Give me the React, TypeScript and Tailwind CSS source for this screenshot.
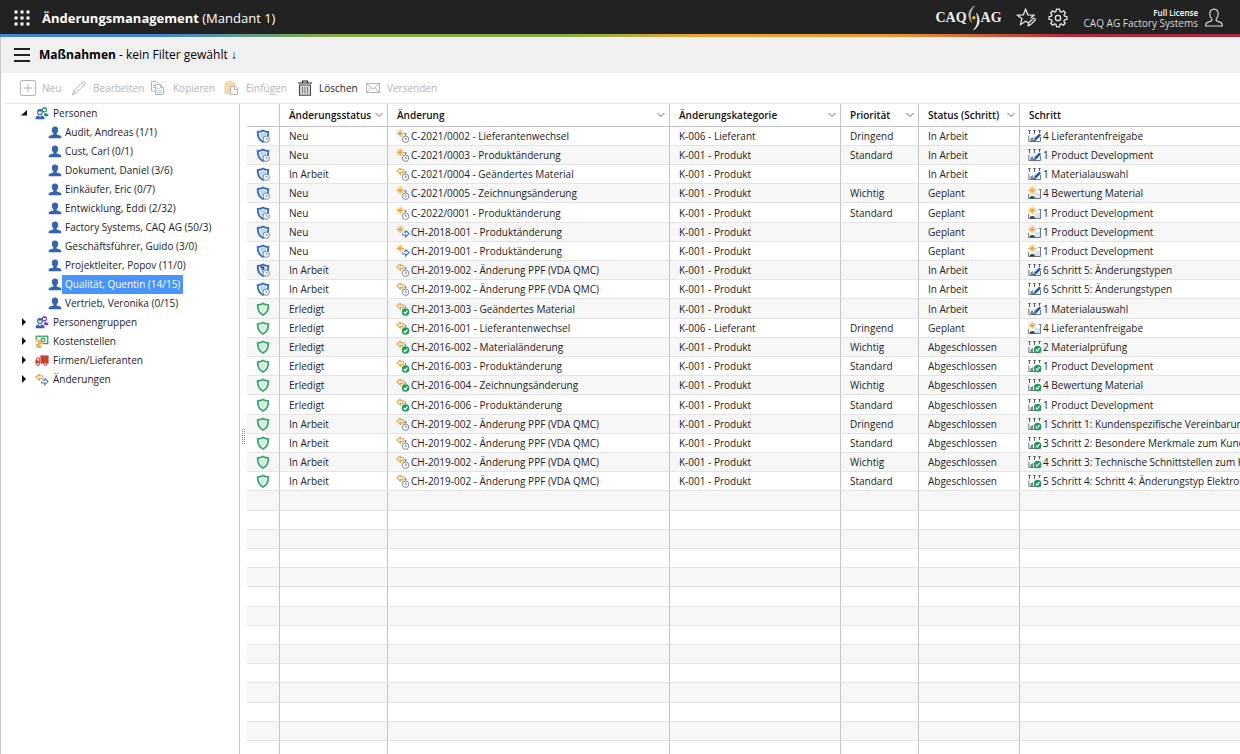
import React from "react";

type ShieldKind = "open" | "question" | "done";
type ChangeKind = "new-clock" | "loop-clock" | "new-arrow" | "loop-check";
type StepKind = "edit" | "planned" | "check";

interface Row {
  shield: ShieldKind;
  status: string;
  icon: ChangeKind;
  change: string;
  category: string;
  priority: string;
  stepStatus: string;
  stepIcon: StepKind;
  step: string;
}

const r = (
  shield: ShieldKind,
  status: string,
  icon: ChangeKind,
  change: string,
  category: string,
  priority: string,
  stepStatus: string,
  stepIcon: StepKind,
  step: string,
): Row => ({ shield, status, icon, change, category, priority, stepStatus, stepIcon, step });

const PRODUCT = "K-001 - Produkt";
const SUPPLIER = "K-006 - Lieferant";

const rows: Row[] = [
  r("open", "Neu", "new-clock", "C-2021/0002 - Lieferantenwechsel", SUPPLIER, "Dringend", "In Arbeit", "edit", "4 Lieferantenfreigabe"),
  r("open", "Neu", "new-clock", "C-2021/0003 - Produktänderung", PRODUCT, "Standard", "In Arbeit", "edit", "1 Product Development"),
  r("open", "In Arbeit", "loop-clock", "C-2021/0004 - Geändertes Material", PRODUCT, "", "In Arbeit", "edit", "1 Materialauswahl"),
  r("open", "Neu", "new-clock", "C-2021/0005 - Zeichnungsänderung", PRODUCT, "Wichtig", "Geplant", "planned", "4 Bewertung Material"),
  r("open", "Neu", "new-clock", "C-2022/0001 - Produktänderung", PRODUCT, "Standard", "Geplant", "planned", "1 Product Development"),
  r("open", "Neu", "new-arrow", "CH-2018-001 - Produktänderung", PRODUCT, "", "Geplant", "planned", "1 Product Development"),
  r("open", "Neu", "new-arrow", "CH-2019-001 - Produktänderung", PRODUCT, "", "Geplant", "planned", "1 Product Development"),
  r("question", "In Arbeit", "loop-clock", "CH-2019-002 - Änderung PPF (VDA QMC)", PRODUCT, "", "In Arbeit", "edit", "6 Schritt 5: Änderungstypen"),
  r("open", "In Arbeit", "loop-clock", "CH-2019-002 - Änderung PPF (VDA QMC)", PRODUCT, "", "In Arbeit", "edit", "6 Schritt 5: Änderungstypen"),
  r("done", "Erledigt", "loop-check", "CH-2013-003 - Geändertes Material", PRODUCT, "", "In Arbeit", "edit", "1 Materialauswahl"),
  r("done", "Erledigt", "loop-check", "CH-2016-001 - Lieferantenwechsel", SUPPLIER, "Dringend", "Geplant", "planned", "4 Lieferantenfreigabe"),
  r("done", "Erledigt", "loop-check", "CH-2016-002 - Materialänderung", PRODUCT, "Wichtig", "Abgeschlossen", "check", "2 Materialprüfung"),
  r("done", "Erledigt", "loop-check", "CH-2016-003 - Produktänderung", PRODUCT, "Standard", "Abgeschlossen", "check", "1 Product Development"),
  r("done", "Erledigt", "loop-check", "CH-2016-004 - Zeichnungsänderung", PRODUCT, "Wichtig", "Abgeschlossen", "check", "4 Bewertung Material"),
  r("done", "Erledigt", "loop-check", "CH-2016-006 - Produktänderung", PRODUCT, "Standard", "Abgeschlossen", "check", "1 Product Development"),
  r("done", "In Arbeit", "loop-clock", "CH-2019-002 - Änderung PPF (VDA QMC)", PRODUCT, "Dringend", "Abgeschlossen", "check", "1 Schritt 1: Kundenspezifische Vereinbarungen"),
  r("done", "In Arbeit", "loop-clock", "CH-2019-002 - Änderung PPF (VDA QMC)", PRODUCT, "Standard", "Abgeschlossen", "check", "3 Schritt 2: Besondere Merkmale zum Kunden"),
  r("done", "In Arbeit", "loop-clock", "CH-2019-002 - Änderung PPF (VDA QMC)", PRODUCT, "Wichtig", "Abgeschlossen", "check", "4 Schritt 3: Technische Schnittstellen zum Kunden"),
  r("done", "In Arbeit", "loop-clock", "CH-2019-002 - Änderung PPF (VDA QMC)", PRODUCT, "Standard", "Abgeschlossen", "check", "5 Schritt 4: Schritt 4: Änderungstyp Elektronik"),
];

const people = [
  "Audit, Andreas (1/1)",
  "Cust, Carl (0/1)",
  "Dokument, Daniel (3/6)",
  "Einkäufer, Eric (0/7)",
  "Entwicklung, Eddi (2/32)",
  "Factory Systems, CAQ AG (50/3)",
  "Geschäftsführer, Guido (3/0)",
  "Projektleiter, Popov (11/0)",
  "Qualität, Quentin (14/15)",
  "Vertrieb, Veronika (0/15)",
];

const EMPTY_ROWS = 14;

function ShieldIcon({ kind }: { kind: ShieldKind }) {
  const green = kind === "done";
  const stroke = green ? "#3aa66a" : "#3667b0";
  return (
    <svg viewBox="0 0 14 14" className="size-[14px] shrink-0" aria-hidden="true">
      <path
        d="M7 1.4C5.5 2.4 3.6 2.8 1.7 2.8C1.5 7.4 2.9 10.9 7 13C11.1 10.9 12.5 7.4 12.3 2.8C10.4 2.8 8.5 2.4 7 1.4Z"
        fill={green ? "#fff" : "#eef5fd"}
        stroke={stroke}
        strokeWidth="1.8"
        strokeLinejoin="round"
      />
      <path
        d="M7 3.6C6.2 4 5.2 4.3 4 4.4C4.1 7.4 4.9 9.4 7 10.8C9.1 9.4 9.9 7.4 10 4.4C8.8 4.3 7.8 4 7 3.6Z"
        fill={green ? "#cdeeda" : "#b5d8f5"}
      />
      {kind === "question" && (
        <path d="M5 5C5.3 3.8 7.6 3.8 7.6 5.1C7.6 6 6.4 6.1 6.4 7.2" fill="none" stroke="#27457c" strokeWidth="1.5" />
      )}
      {!green && <ClockBadge x={10.2} y={10.2} />}
    </svg>
  );
}

function ClockBadge({ x, y }: { x: number; y: number }) {
  return (
    <g>
      <circle cx={x} cy={y} r="3.2" fill="#fff" stroke="#7d848c" strokeWidth="1" />
      <path d={`M${x} ${y - 1.6}V${y}H${x + 1.5}`} fill="none" stroke="#4a7fc8" strokeWidth=".9" />
    </g>
  );
}

function CheckBadge({ x, y }: { x: number; y: number }) {
  return (
    <g>
      <circle cx={x} cy={y} r="3.8" fill="#239a5c" />
      <path d={`M${x - 1.8} ${y}L${x - 0.4} ${y + 1.5}L${x + 1.9} ${y - 1.4}`} fill="none" stroke="#fff" strokeWidth="1.2" />
    </g>
  );
}

function Sun({ x, y }: { x: number; y: number }) {
  return (
    <g stroke="#eba53f" strokeWidth=".9">
      <circle cx={x} cy={y} r="2" fill="#f3b95f" stroke="none" />
      <path
        d={`M${x} ${y - 4}V${y + 4}M${x - 4} ${y}H${x + 4}M${x - 2.8} ${y - 2.8}L${x + 2.8} ${y + 2.8}M${x - 2.8} ${y + 2.8}L${x + 2.8} ${y - 2.8}`}
      />
    </g>
  );
}

const LEFT_ARROW = "M4.4 1L1 4.1L4.4 7.2V5.4H7V7.2M4.4 1V2.8H7.6V4.2";
const RIGHT_ARROW = "M9.6 5.4L13 8.6L9.6 11.8V10H6.6V8.6M9.6 5.4V7.2H7.8";

function ChangeIcon({ kind }: { kind: ChangeKind }) {
  const isNew = kind === "new-clock" || kind === "new-arrow";
  return (
    <svg viewBox="0 0 14 14" className="size-[14px] shrink-0" aria-hidden="true">
      {isNew ? <Sun x={4.2} y={4.4} /> : <path d={LEFT_ARROW} fill="none" stroke="#e9a23c" strokeWidth="1.1" />}
      {kind === "new-arrow" && <path d={RIGHT_ARROW} fill="none" stroke="#3f78c9" strokeWidth="1.2" />}
      {(kind === "new-clock" || kind === "loop-clock") && (
        <>
          <path d="M9.5 4.2V6.4M8.5 4.9H10.5" stroke="#3f78c9" strokeWidth="1.1" />
          <ClockBadge x={9.6} y={10.2} />
        </>
      )}
      {kind === "loop-check" && (
        <>
          <path d="M9.3 3.8V6" stroke="#3f78c9" strokeWidth="1.1" />
          <CheckBadge x={9.6} y={10} />
        </>
      )}
    </svg>
  );
}

function StepIcon({ kind }: { kind: StepKind }) {
  return (
    <svg viewBox="0 0 14 14" className="size-[14px] shrink-0" aria-hidden="true">
      {kind === "planned" ? (
        <>
          <path d="M6.6 7H13V12.4H6.6Z" fill="#cfe6f8" />
          <path d="M.6 8V12.5H12.5V3M10.6 3.5H13.4" fill="none" stroke="#6f7780" strokeWidth="1" />
          <path d="M1.6 12.4C1.6 9.2 7 9.2 7 12.4Z" fill="#3e454c" />
          <Sun x={4.2} y={4.4} />
        </>
      ) : (
        <>
          <path d="M.8 6.6V12.5H12.5V8" fill="none" stroke="#6f7780" strokeWidth="1" />
          <path d="M1.5 2V5M6.5 2V5M11.5 2V4M.3 1.5H2.7M5.3 1.5H7.7M10.3 1.5H12.7" stroke="#555d66" strokeWidth="1" />
          <path d="M2.4 12V9.4L5 8V12Z" fill="#7b838b" />
          <path d="M6 7H8.6V12H6Z" fill="#cfe6f8" />
          {kind === "edit" ? (
            <>
              <path d="M6.8 10.8L12.2 5.4" stroke="#1f57b5" strokeWidth="2.6" />
              <path d="M4.8 12.8L5.6 10.2L7.6 12.2Z" fill="#1f57b5" />
            </>
          ) : (
            <CheckBadge x={9.6} y={9.6} />
          )}
        </>
      )}
    </svg>
  );
}

function PersonIcon() {
  return (
    <svg viewBox="0 0 14 14" className="size-[14px] shrink-0" aria-hidden="true">
      <path
        d="M7 .4C9.2 .4 10.2 1.7 10.2 3.7C10.2 5.4 9.4 6.6 8.7 7.3V8.4L12 9.6C13 10 13.4 10.6 13.4 12.2H.6C.6 10.6 1 10 2 9.6L5.3 8.4V7.3C4.6 6.6 3.8 5.4 3.8 3.7C3.8 1.7 4.8 .4 7 .4Z"
        fill="#3464ad"
      />
    </svg>
  );
}

function PeopleIcon({ color }: { color: string }) {
  return (
    <svg viewBox="0 0 14 14" className="size-[14px] shrink-0" aria-hidden="true">
      <circle cx="9.4" cy="2.8" r="2.1" fill="#fff" stroke={color} strokeWidth="1.1" />
      <path d="M7.4 1.8C8.2 .2 10.8 .2 11.4 2Z" fill={color} />
      <path d="M9 6.6C11.8 5.4 13.4 6.6 13.4 9.2H9.4Z" fill={color} />
      <circle cx="5" cy="5" r="2.4" fill="#fff" stroke="#2f62b3" strokeWidth="1.1" />
      <path d="M2.6 4.4C3 2 7 2 7.4 4.4Z" fill="#2f62b3" />
      <path d="M.5 12.2C.5 9.4 1.8 8.2 5 8.2C8.2 8.2 9.6 9.4 9.6 12.2Z" fill="#2f62b3" />
      <path d="M3.6 8.2L5 10.6L6.4 8.2Z" fill="#fff" />
    </svg>
  );
}

function MoneyIcon() {
  return (
    <svg viewBox="0 0 14 14" className="size-[14px] shrink-0" aria-hidden="true">
      <rect x="1.2" y="1.2" width="11.6" height="7.4" fill="#e4f5ea" stroke="#2f9c60" strokeWidth="1.2" />
      <circle cx="8" cy="4.9" r="1.8" fill="none" stroke="#2f9c60" strokeWidth="1.1" />
      <path d="M.4 5H6V7H8V9.2H6.6V12.4H.4Z" fill="#fff" />
      <path d="M1.6 6H6.2M3 8H7.6M1 10H5.6M1.6 12H6.4" stroke="#e39a33" strokeWidth="1.4" />
    </svg>
  );
}

function TruckIcon() {
  return (
    <svg viewBox="0 0 14 14" className="size-[14px] shrink-0" aria-hidden="true">
      <path d="M5.4 1.4H13.6V9.6H5.4Z" fill="#c9402b" />
      <path d="M4.8 3.6H2.2L.4 6.2V9.6H4.8Z" fill="#c9402b" />
      <path d="M2.7 4.6H3.9V6.4H1.7Z" fill="#fff" />
      <circle cx="3" cy="10" r="1.5" fill="#fff" stroke="#c9402b" strokeWidth="1" />
      <circle cx="10.4" cy="10" r="1.5" fill="#fff" stroke="#c9402b" strokeWidth="1" />
    </svg>
  );
}

function ArrowsIcon() {
  return (
    <svg viewBox="0 0 14 14" className="size-[14px] shrink-0" aria-hidden="true">
      <path d={LEFT_ARROW} fill="none" stroke="#e9a23c" strokeWidth="1.1" />
      <path d={RIGHT_ARROW} fill="none" stroke="#3f78c9" strokeWidth="1.1" />
    </svg>
  );
}

function Logo() {
  return (
    <div className="flex items-center font-['Liberation_Serif',serif] text-sm font-bold leading-none text-[#eee]" aria-label="CAQ AG">
      <span>CAQ</span>
      <svg viewBox="0 0 14 26" className="h-[26px] w-[14px]" aria-hidden="true">
        <path d="M7.6 1C1.6 4 -.6 11 4.6 17.6C2.6 11.4 3 6 7.6 1Z" fill="#b9b9b9" stroke="#b9b9b9" strokeWidth=".4" />
        <path d="M6.4 25C12.4 22 14.6 14 9.4 8C11.4 14.6 11 20 6.4 25Z" fill="#fff" stroke="#fff" strokeWidth=".4" />
        <circle cx="6.8" cy="12.8" r="1.8" fill="#f2b21b" />
      </svg>
      <span>AG</span>
    </div>
  );
}

function TopBar() {
  return (
    <header className="bg-[#222] text-white">
      <div className="flex h-[34px] items-center pl-3 pr-4 pt-[2px]">
        <button type="button" aria-label="Apps" className="flex size-5 items-center justify-center">
          <svg viewBox="0 0 16 16" className="size-4" fill="#fff" aria-hidden="true">
            {[0, 6, 12].map((y) => [0, 6, 12].map((x) => <rect key={`${x}-${y}`} x={x + 0.5} y={y + 0.5} width="3" height="3" />))}
          </svg>
        </button>
        <h1 className="ml-[10px] whitespace-nowrap text-[13px] font-normal">
          <strong className="font-bold">Änderungsmanagement</strong> (Mandant 1)
        </h1>
        <div className="ml-auto flex items-center">
          <Logo />
          <button type="button" aria-label="Favoriten" className="ml-[14px]">
            <svg viewBox="0 0 20 20" className="size-5" fill="none" stroke="#e6e6e6" strokeWidth="1.3" strokeLinejoin="round" aria-hidden="true">
              <path d="M12.2 14.6L9.6 13.2L4.3 16.8L6 10.7L1.1 7.1L7.3 6.9L9.6 1L11.9 6.9L18.4 7.1L14.6 10" />
              <path d="M12 17.8L12.8 14.8L17.2 10.4C18 9.6 19.8 11.2 19 12.2L14.6 16.6Z" />
            </svg>
          </button>
          <button type="button" aria-label="Einstellungen" className="ml-3">
            <svg viewBox="0 0 20 20" className="size-5" fill="none" stroke="#e6e6e6" strokeWidth="1.3" strokeLinejoin="round" aria-hidden="true">
              <path d="M8.4 1.2H11.6L12.1 3.6L13.5 4.2L15.5 2.8L17.4 4.8L16 6.8L16.5 8.1L18.9 8.6V11.4L16.5 11.9L15.9 13.3L17.3 15.3L15.3 17.3L13.3 15.9L12 16.4L11.5 18.8H8.5L8 16.4L6.7 15.9L4.7 17.3L2.7 15.3L4.1 13.3L3.5 11.9L1.1 11.4V8.6L3.5 8.1L4 6.8L2.6 4.8L4.6 2.8L6.6 4.2L7.9 3.6Z" />
              <circle cx="10" cy="10" r="2.7" />
            </svg>
          </button>
          <button type="button" className="ml-4 flex items-center gap-[6px] text-right">
            <span className="flex flex-col whitespace-nowrap leading-[11px]">
              <span className="text-[8px] font-semibold">Full License</span>
              <span className="text-[10px] text-[#d8d8d8]">CAQ AG Factory Systems</span>
            </span>
            <svg viewBox="0 0 20 20" className="size-5" fill="none" stroke="#d8d8d8" strokeWidth="1.2" strokeLinejoin="round" aria-hidden="true">
              <path d="M10 1.2C13 1.2 14.3 3.4 14.2 6C14.1 8.4 13.2 10 12.2 11.2V12.8L17 14.6C18 15.1 18.4 16 18.4 18H1.6C1.6 16 2 15.1 3 14.6L7.8 12.8V11.2C6.8 10 5.9 8.4 5.8 6C5.7 3.4 7 1.2 10 1.2Z" />
            </svg>
          </button>
        </div>
      </div>
      <div className="h-[3px] bg-[linear-gradient(to_right,#3f87d2_0%,#3f87d2_13%,#86ad45_27%,#86ad45_46%,#eaa437_56%,#ea9a35_72%,#b52a3c_86%,#b02a40_100%)]" />
    </header>
  );
}

function ToolButton({ label, width, disabled = true, children }: { label: string; width: string; disabled?: boolean; children: React.ReactNode }) {
  return (
    <button
      type="button"
      disabled={disabled}
      className={`flex shrink-0 items-center gap-[6px] whitespace-nowrap ${width} ${disabled ? "text-[#b4b4b4]" : "text-[#222]"}`}
    >
      <svg viewBox="0 0 16 16" className="size-4 shrink-0" fill="none" stroke="currentColor" aria-hidden="true">
        {children}
      </svg>
      {label}
    </button>
  );
}

function Toolbar() {
  return (
    <div role="toolbar" className="ml-1 flex h-[31px] shrink-0 items-center border-b border-[#e6e6e6] pl-[15px]">
      <ToolButton label="Neu" width="w-[51px]">
        <rect x=".5" y=".5" width="15" height="15" rx="1.5" />
        <path d="M8 4V12M4 8H12" />
      </ToolButton>
      <ToolButton label="Bearbeiten" width="w-[80px]">
        <path d="M1.4 14.8L2.6 11L12 1.6C12.8 .9 15 2.8 14.3 3.8L5 13.4ZM10.8 2.8L13.2 5.2M2.6 11L5 13.4" />
      </ToolButton>
      <ToolButton label="Kopieren" width="w-[73px]">
        <path d="M4 11H.5V1.5H5.5L8 4V5M2 5.5H4M2 7.5H4" />
        <path d="M4.5 4.5H9.5L12.5 7.5V14.5H4.5ZM9.5 4.5V7.5H12.5" fill="#fff" />
        <path d="M6 8.5H8.5M6 10.5H11M6 12.5H11" stroke="#a9cdea" />
      </ToolButton>
      <ToolButton label="Einfügen" width="w-[73px]">
        <path d="M1 3H4V1.5H8V3H11V6H6V13.5H1Z" fill="#f6dcae" stroke="#efd09a" />
        <path d="M6.5 6.5H11.5L13.5 8.5V14.5H6.5ZM10.5 6.5V9.5H13.5" fill="#fff" />
      </ToolButton>
      <ToolButton label="Löschen" width="w-[68px]" disabled={false}>
        <path d="M1 3H15M5.5 3V1H10.5V3" strokeWidth="1.2" />
        <path d="M2.5 5H13.5V15.3H2.5Z" fill="#d9dadb" stroke="#444" strokeWidth="1.1" />
        <path d="M5.5 7V13.5M8 7V13.5M10.5 7V13.5" stroke="#777" />
      </ToolButton>
      <ToolButton label="Versenden" width="w-[80px]">
        <path d="M1.5 3.5H14.5V12.5H1.5ZM1.5 3.5L8 9L14.5 3.5M1.5 12.5L6 7.5M14.5 12.5L10 7.5" />
      </ToolButton>
    </div>
  );
}

function TreeItem({ label, icon, open = false }: { label: string; icon: React.ReactNode; open?: boolean }) {
  return (
    <button type="button" aria-expanded={open} className="flex h-[19px] items-center whitespace-nowrap">
      <svg viewBox="0 0 8 8" className="mb-[2px] mr-[7px] size-2" aria-hidden="true">
        {open ? <path d="M7 1V6.5H1Z" fill="#111" /> : <path d="M2 0L6 4L2 8Z" fill="#111" />}
      </svg>
      {icon}
      <span className="ml-1 leading-[19px]">{label}</span>
    </button>
  );
}

function Tree() {
  return (
    <nav aria-label="Navigation" className="w-[239px] shrink-0 border-r border-[#c6c6c6] pl-[19px]">
      <TreeItem label="Personen" open icon={<PeopleIcon color="#1f9a55" />} />
      <ul className="pl-7">
        {people.map((name) => {
          const selected = name.startsWith("Qualität");
          return (
            <li key={name}>
              <button type="button" className="flex h-[19px] items-center whitespace-nowrap">
                <PersonIcon />
                <span className={`px-[3px] leading-[19px] ${selected ? "bg-[#4795fb] text-white" : ""}`}>{name}</span>
              </button>
            </li>
          );
        })}
      </ul>
      <TreeItem label="Personengruppen" icon={<PeopleIcon color="#7a35a8" />} />
      <TreeItem label="Kostenstellen" icon={<MoneyIcon />} />
      <TreeItem label="Firmen/Lieferanten" icon={<TruckIcon />} />
      <TreeItem label="Änderungen" icon={<ArrowsIcon />} />
    </nav>
  );
}

const columns: { label: string; width: string; menu: boolean }[] = [
  { label: "", width: "w-[33px]", menu: false },
  { label: "Änderungsstatus", width: "w-[108px]", menu: true },
  { label: "Änderung", width: "w-[282px]", menu: true },
  { label: "Änderungskategorie", width: "w-[171px]", menu: true },
  { label: "Priorität", width: "w-[78px]", menu: true },
  { label: "Status (Schritt)", width: "w-[101px]", menu: true },
  { label: "Schritt", width: "w-auto", menu: false },
];

const CELL = "overflow-hidden whitespace-nowrap border-b border-b-[#e4e4e4] border-r border-r-[#c4c4c4] p-0 last:border-r-0";
const TEXT_CELL = `${CELL} pl-[9px]`;
const ICON_CELL = `${CELL} pl-2`;

function IconText({ icon, children }: { icon: React.ReactNode; children: React.ReactNode }) {
  return (
    <span className="flex items-center gap-px">
      {icon}
      {children}
    </span>
  );
}

function DataTable() {
  return (
    <div className="min-w-0 flex-1 overflow-hidden">
      <table className="w-full table-fixed border-separate border-spacing-0 text-left">
        <thead>
          <tr className="h-[23px]">
            {columns.map((c) => (
              <th
                key={c.label}
                scope="col"
                className={`border-b border-b-[#c4c4c4] border-r border-r-[#c4c4c4] p-0 pl-[9px] pr-1 font-semibold text-[#111] last:border-r-0 ${c.width}`}
              >
                <span className="flex items-center justify-between whitespace-nowrap">
                  {c.label}
                  {c.menu && (
                    <svg viewBox="0 0 8 6" className="h-[6px] w-2" fill="none" stroke="#666" aria-hidden="true">
                      <path d="M.5 1L4 4.5L7.5 1" />
                    </svg>
                  )}
                </span>
              </th>
            ))}
          </tr>
        </thead>
        <tbody>
          {rows.map((row, i) => (
            <tr key={i} className="h-[19px] nth-[5n]:h-[20px] even:bg-[#f7f7f7]">
              <td className={TEXT_CELL}>
                <span className="flex items-center">
                  <ShieldIcon kind={row.shield} />
                </span>
              </td>
              <td className={TEXT_CELL}>{row.status}</td>
              <td className={ICON_CELL}>
                <IconText icon={<ChangeIcon kind={row.icon} />}>{row.change}</IconText>
              </td>
              <td className={TEXT_CELL}>{row.category}</td>
              <td className={TEXT_CELL}>{row.priority}</td>
              <td className={TEXT_CELL}>{row.stepStatus}</td>
              <td className={ICON_CELL}>
                <IconText icon={<StepIcon kind={row.stepIcon} />}>{row.step}</IconText>
              </td>
            </tr>
          ))}
          {Array.from({ length: EMPTY_ROWS }, (_, i) => (
            <tr key={`empty-${i}`} className="h-[19px] nth-[5n]:h-[20px] even:bg-[#f7f7f7]">
              {columns.map((c) => (
                <td key={c.label} className={CELL} />
              ))}
            </tr>
          ))}
        </tbody>
      </table>
    </div>
  );
}

export default function App() {
  return (
    <div className="flex h-screen flex-col overflow-hidden bg-white font-['Open_Sans','Noto_Sans',sans-serif] text-[10px] leading-4 text-[#222]">
      <TopBar />
      <div className="flex min-h-0 flex-1 flex-col border-l border-[#c6c6c6]">
        <div className="flex h-9 shrink-0 items-center bg-[#f0f0f0] pl-[13px] text-black">
          <button type="button" aria-label="Menü" className="flex size-4 flex-col justify-between py-px">
            <span className="h-[2px] w-full bg-[#222]" />
            <span className="h-[2px] w-full bg-[#222]" />
            <span className="h-[2px] w-full bg-[#222]" />
          </button>
          <h2 className="ml-[9px] whitespace-nowrap text-xs font-normal">
            <strong className="font-bold">Maßnahmen</strong> - kein Filter gewählt ↓
          </h2>
        </div>
        <Toolbar />
        <main className="flex min-h-0 flex-1">
          <Tree />
          <div role="separator" aria-orientation="vertical" className="flex w-[7px] shrink-0 items-center justify-center">
            <svg viewBox="0 0 4 16" className="mt-4 h-4 w-1" stroke="#777" strokeDasharray="1 1" aria-hidden="true">
              <path d="M.5 0V16M2.5 0V16" />
            </svg>
          </div>
          <DataTable />
        </main>
      </div>
    </div>
  );
}
